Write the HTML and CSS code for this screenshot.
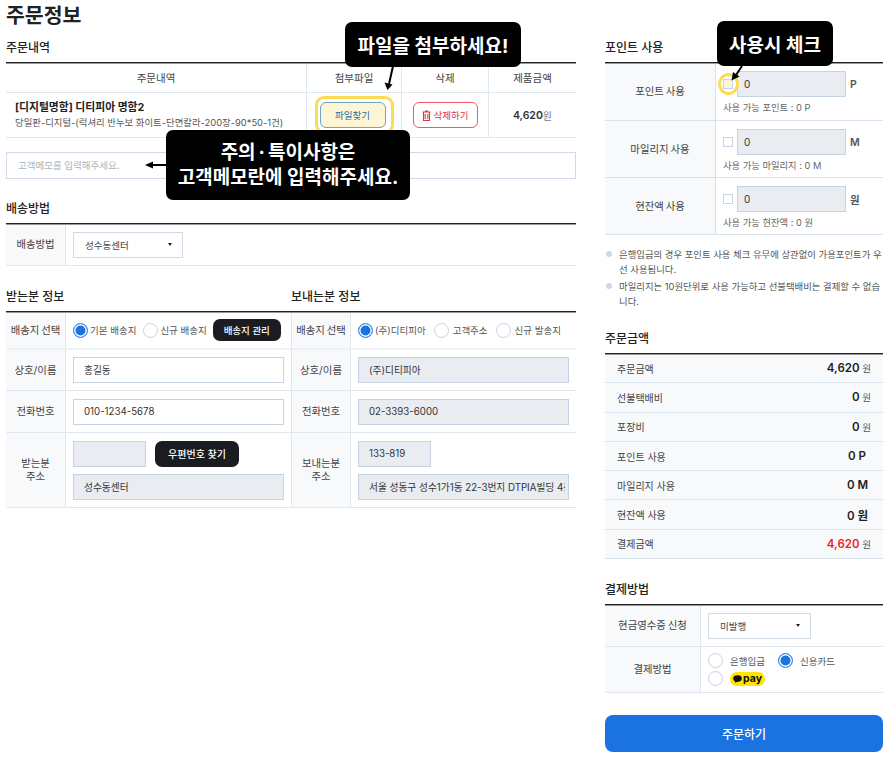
FILE: index.html
```html
<!DOCTYPE html>
<html lang="ko">
<head>
<meta charset="utf-8">
<title>주문정보</title>
<link rel="stylesheet" href="styles.css">
</head>
<body>
<div class="page">
  <main class="left">
    <h1 class="title">주문정보</h1>
    <h2 class="sec first">주문내역</h2>
    <div class="order">
      <div class="order-row head">
        <div class="c">주문내역</div><div class="c bl">첨부파일</div><div class="c bl">삭제</div><div class="c bl">제품금액</div>
      </div>
      <div class="order-row item">
        <div class="c info">
          <strong>[디지털명함] 디티피아 명함2</strong>
          <span>당일판-디지털-(럭셔리 반누보 화이트-단면칼라-200장-90*50-1건)</span>
        </div>
        <div class="c bl"><div class="glow"><button class="file">파일찾기</button></div></div>
        <div class="c bl"><button class="del">
          <svg width="9" height="11" viewBox="0 0 9 11"><path d="M3 1h3M.5 2h8M1.500 2v8.500h6V2M3.200 4v5M5.800 4v5" fill="none" stroke="#e5333b" stroke-width="1.100"/></svg>삭제하기</button></div>
        <div class="c bl price"><b>4,620</b>원</div>
      </div>
    </div>
    <input class="memo" placeholder="고객메모를 입력해주세요.">

    <h2 class="sec ship">배송방법</h2>
    <div class="form ship-form">
      <div class="row r-ship"><div class="th">배송방법</div><div class="td"><div class="select w110"><span>성수동센터</span><i class="caret"></i></div></div></div>
    </div>

    <div class="two">
      <section>
        <h2 class="sec">받는분 정보</h2>
        <div class="form">
          <div class="row r1"><div class="th">배송지 선택</div><div class="td radios">
            <label class="radio on">기본 배송지</label><label class="radio">신규 배송지</label><button class="dark sm">배송지 관리</button>
          </div></div>
          <div class="row r2"><div class="th">상호/이름</div><div class="td"><input class="field" value="홍길동"></div></div>
          <div class="row r2"><div class="th">전화번호</div><div class="td"><input class="field" value="010-1234-5678"></div></div>
          <div class="row r3"><div class="th">받는분<br>주소</div><div class="td stack">
            <div class="zip-line"><input class="field ro zip" readonly><button class="dark zipbtn">우편번호 찾기</button></div>
            <input class="field ro" readonly value="성수동센터">
          </div></div>
        </div>
      </section>
      <section class="sender">
        <h2 class="sec">보내는분 정보</h2>
        <div class="form">
          <div class="row r1"><div class="th">배송지 선택</div><div class="td radios">
            <label class="radio on">(주)디티피아</label><label class="radio">고객주소</label><label class="radio">신규 발송지</label>
          </div></div>
          <div class="row r2"><div class="th">상호/이름</div><div class="td"><input class="field ro" readonly value="(주)디티피아"></div></div>
          <div class="row r2"><div class="th">전화번호</div><div class="td"><input class="field ro" readonly value="02-3393-6000"></div></div>
          <div class="row r3"><div class="th">보내는분<br>주소</div><div class="td stack">
            <div class="zip-line"><input class="field ro zip" readonly value="133-819"></div>
            <input class="field ro clip" readonly value="서울 성동구 성수1가1동 22-3번지 DTPIA빌딩 4층">
          </div></div>
        </div>
      </section>
    </div>
  </main>

  <aside class="right">
    <h2 class="sec r-first">포인트 사용</h2>
    <div class="form wide">
      <div class="row pt"><div class="th">포인트 사용</div><div class="td">
        <div class="pt-line"><span class="check hl"></span><input class="field ro num" readonly value="0"><b>P</b></div>
        <p class="avail">사용 가능 포인트 : 0 P</p></div></div>
      <div class="row pt"><div class="th">마일리지 사용</div><div class="td">
        <div class="pt-line"><span class="check"></span><input class="field ro num" readonly value="0"><b>M</b></div>
        <p class="avail">사용 가능 마일리지 : 0 M</p></div></div>
      <div class="row pt"><div class="th">현잔액 사용</div><div class="td">
        <div class="pt-line"><span class="check"></span><input class="field ro num" readonly value="0"><b>원</b></div>
        <p class="avail">사용 가능 현잔액 : 0 원</p></div></div>
    </div>
    <ul class="notes">
      <li>은행입금의 경우 포인트 사용 체크 유무에 상관없이 가용포인트가 우선 사용됩니다.</li>
      <li>마일리지는 10원단위로 사용 가능하고 선불택배비는 결제할 수 없습니다.</li>
    </ul>

    <h2 class="sec total-h">주문금액</h2>
    <div class="totals">
      <div class="t"><span>주문금액</span><em><b>4,620</b> 원</em></div>
      <div class="t"><span>선불택배비</span><em><b>0</b> 원</em></div>
      <div class="t"><span>포장비</span><em><b>0</b> 원</em></div>
      <div class="t"><span>포인트 사용</span><em class="in p"><b>0 P</b></em></div>
      <div class="t"><span>마일리지 사용</span><em class="in"><b>0 M</b></em></div>
      <div class="t"><span>현잔액 사용</span><em class="in"><b>0 원</b></em></div>
      <div class="t"><span>결제금액</span><em><b class="red">4,620</b> 원</em></div>
    </div>

    <h2 class="sec pay-h">결제방법</h2>
    <div class="form pay">
      <div class="row p1"><div class="th">현금영수증 신청</div><div class="td"><div class="select w103"><span>미발행</span><i class="caret"></i></div></div></div>
      <div class="row p2"><div class="th">결제방법</div><div class="td paygrid">
        <div class="payline"><label class="radio big">은행입금</label><label class="radio big on">신용카드</label></div>
        <div class="payline"><label class="radio big"><span class="kakao"><svg width="9" height="8" viewBox="0 0 9 8"><ellipse cx="4.500" cy="3.600" rx="4.300" ry="3.300" fill="#111"/><path d="M2.500 5.500L2 8l3-2z" fill="#111"/></svg>pay</span></label></div>
      </div></div>
    </div>
    <button class="submit">주문하기</button>
  </aside>

  <div class="tip tip-file">파일을 첨부하세요!</div>
  <div class="tip tip-memo"><span>주의<span class="dot">·</span>특이사항은</span><span>고객메모란에 입력해주세요.</span></div>
  <div class="tip tip-check">사용시 체크</div>
  <span class="ring"></span>
  <svg class="arrows" width="890" height="200" viewBox="0 0 890 200">
    <path d="M393 66L389 84" stroke="#000" stroke-width="2"/><path d="M384.500 82.500L392.500 84.500L387.500 90Z" fill="#000"/>
    <path d="M166 165H152" stroke="#000" stroke-width="2"/><path d="M153 161.500V168.500L145 165Z" fill="#000"/>
    <path d="M742 66L736 75" stroke="#000" stroke-width="2"/><path d="M733 72L739.500 76.500L731.500 80.500Z" fill="#000"/>
  </svg>
</div>
</body>
</html>
```
FILE: styles.css
```css
* { box-sizing: border-box; }
html, body { margin: 0; background: #fff; }
body {
  font-family: Inter, "Noto Sans CJK KR", "Noto Sans", sans-serif;
  color: #333;
  font-size: 10.500px;
}
button, input { font-family: inherit; }
button { cursor: pointer; padding: 0; }
.page {
  position: relative;
  width: 890px;
  height: 767px;
  overflow: hidden;
  padding: 0 7px 0 6px;
  display: grid;
  grid-template-columns: 570px 278px;
  column-gap: 29px;
  align-items: start;
}
.title { margin: 2px 0 0; font-size: 20.500px; line-height: 28px; font-weight: 700; color: #222; }
.sec {
  position: relative;
  z-index: 1;
  margin: 0;
  font-size: 12px;
  line-height: 18px;
  font-weight: 500;
  color: #222;
  padding-bottom: 5px;
  border-bottom: 1px solid #222;
  box-shadow: 0 1px 0 #999;
}
.sec.first { margin-top: 9px; }
.sec.ship { margin-top: 21px; }
.sec.r-first { margin-top: 39px; }
.sec.total-h { margin-top: 21px; }
.sec.pay-h { margin-top: 22px; }

/* order table */
.order-row { display: grid; grid-template-columns: 300px 95px 87px 88px; border-bottom: 1px solid #dfe7f0; }
.order-row.head { height: 30px; }
.order-row.item { height: 45px; }
.c { display: flex; align-items: center; justify-content: center; }
.bl { border-left: 1px solid #dfe7f0; }
.head .c { color: #444; font-size: 10.500px; }
.info { flex-direction: column; align-items: flex-start; padding-left: 9px; }
.info strong { font-size: 10.800px; font-weight: 700; color: #222; line-height: 16px; }
.info span { font-size: 9.400px; color: #555; line-height: 14px; white-space: nowrap; }
.glow { border: 3px solid #fcdc55; border-radius: 9px; padding: 3px 5px 3px 2px; background: #fff; }
.file {
  display: block; width: 66px; height: 26px; border: 1px solid #6ea4c8; border-radius: 6px;
  background: #fdf5d3; color: #1f6fae; font-size: 9.500px;
}
.del {
  display: flex; align-items: center; justify-content: center; gap: 3px;
  width: 65px; height: 26px; border: 1px solid #ef5a5f; border-radius: 6px;
  background: #fff; color: #e5333b; font-size: 9.500px;
}
.price { font-size: 10px; color: #777; }
.price b { color: #333; font-size: 10.500px; font-weight: 600; }
.memo {
  display: block; width: 100%; margin: 14px 0 0; height: 27px; border: 1px solid #cfdbe7; padding: 0 11px;
  font-size: 9.500px; outline: 0;
}
.memo::placeholder { color: #a9b4c0; opacity: 1; }

/* form rows */
.row { display: grid; grid-template-columns: 60px 1fr; border-bottom: 1px solid #dfe7f0; }
.th { display: flex; align-items: center; justify-content: center; text-align: center; background: #f8f9fb; border-right: 1px solid #dfe7f0; color: #444; line-height: 13px; font-size: 10.400px; word-spacing: -1px; }
.td { display: flex; align-items: center; padding: 0 7px; min-width: 0; }
.r-ship { height: 42px; }
.two { display: grid; grid-template-columns: 285px 285px; margin-top: 22px; }
.sender .form { border-left: 1px solid #dfe7f0; }
.sender .row { grid-template-columns: 59px 1fr; }
.r1 { height: 38px; border-bottom: 2px solid #eef2f7; }
.r2 { height: 41px; }
.r2 + .r2 { height: 42px; }
.r3 { height: 75px; }
.stack { flex-direction: column; align-items: stretch; justify-content: center; gap: 7px; }
.field {
  display: block; width: 100%; margin: 0; height: 26px; border: 1px solid #c5d3e3; border-radius: 0; background: #fff; padding: 0 10px;
  font-size: 9.700px; color: #333; outline: 0;
}
.field.ro { background: #e9ecf1; }
.field.clip { padding-right: 3px; }
.zip-line { display: flex; gap: 9px; }
.field.zip { width: 73px; flex: none; }
.dark {
  border: 0; border-radius: 7px; background: #1b1c21; color: #fff; font-weight: 500;
}
.zipbtn { width: 84px; height: 26px; font-size: 10px; }
.sm { width: 68px; height: 22px; font-size: 9.500px; flex: none; margin-left: -1px; }

.radios { padding: 0 4px 0 7px; gap: 7px; white-space: nowrap; }
.radio { display: inline-flex; align-items: center; gap: 2px; font-size: 9.500px; color: #555; }
.radio::before {
  content: ""; width: 13px; height: 13px; flex: none; border-radius: 50%;
  border: 1px solid #c5d3e3; background: #fff;
}
.radio.on::before { border-color: #3f8ae6; background: #1a73e0; box-shadow: inset 0 0 0 1.500px #fff; }
.sender .radios { gap: 8px; }
.sender .radio + .radio { gap: 4px; }

.select {
  display: flex; align-items: center; justify-content: space-between;
  height: 26px; border: 1px solid #cfdbe7; background: #fff; padding: 0 10px 0 11px; font-size: 9.500px; color: #444;
}
.w110 { width: 110px; }
.w103 { width: 103px; }
.caret { width: 0; height: 0; border: 2.500px solid transparent; border-top: 3.500px solid #222; border-bottom: 0; }

/* right */
.wide .row { grid-template-columns: 111px 1fr; }
.pay .row { grid-template-columns: 96px 1fr; }
.pt { height: 57px; border-bottom-color: #d6e2ee; }
.pt:first-child { height: 58px; }
.pt .th { border-right-color: #d6e2ee; }
.pt .td { flex-direction: column; align-items: flex-start; justify-content: flex-start; padding: 8px 0 0 7px; }
.pt-line { display: flex; align-items: center; color: #444; }
.pt-line b { margin-left: 4px; font-size: 10.500px; font-weight: 600; color: #555; }
.check { width: 10px; height: 10px; border: 1px solid #c5d3e3; background: #fff; margin-right: 4px; flex: none; }
.check.hl { background: #fdf6d8; position: relative; z-index: 2; }
.field.num { width: 109px; padding-left: 6px; font-size: 10px; }
.avail { margin: 4px 0 0; font-size: 9.300px; color: #666; line-height: 13px; }
.notes { list-style: none; margin: 12px 0 0; padding: 0; font-size: 9.400px; line-height: 15px; color: #555; }
.notes li { position: relative; padding-left: 14px; margin-bottom: 2px; }
.notes li::before { content: ""; position: absolute; left: 1px; top: 4px; width: 6px; height: 6px; border-radius: 50%; background: #cdd8e8; }
.t {
  display: flex; justify-content: space-between; align-items: center; height: 29.300px;
  background: #f8f9fb; border-bottom: 1px solid #dae4ef; padding: 0 12px;
  font-size: 10px; color: #444;
}
.t em { font-style: normal; font-size: 9.500px; color: #555; }
.t em.in { padding-right: 3px; }
.t em.p { padding-right: 5px; }
.t b { font-weight: 600; font-size: 11.500px; color: #222; }
.t b.red { color: #f01f26; }
.p1 { height: 42px; }
.p2 { height: 46px; }
.paygrid { flex-direction: column; align-items: flex-start; justify-content: center; gap: 3px; }
.payline { display: flex; gap: 13px; }
.radio.big { gap: 7px; font-size: 9.500px; }
.kakao {
  display: inline-flex; align-items: center; gap: 1px; height: 14px; width: 35px; padding: 0 3px;
  border-radius: 7px; background: #ffe500; color: #111; font-weight: 700; font-size: 10.500px;
}
.submit {
  display: block; width: 278px; height: 37px; margin-top: 22px; border: 0; border-radius: 8px;
  background: #1a73e0; color: #fff; font-size: 12px; font-weight: 500;
}

/* callouts */
.tip {
  position: absolute; z-index: 5; background: #000; color: #fff; border-radius: 7px; font-weight: 700;
  text-align: center; display: flex; align-items: center; justify-content: center; font-size: 19px;
}
.tip-file { left: 345px; top: 22px; width: 176px; height: 45px; }
.tip-memo { left: 166px; top: 130px; width: 244px; height: 70px; line-height: 25px; flex-direction: column; }
.dot { margin: 0 3px; }
.tip-check { left: 717px; top: 21px; width: 116px; height: 45px; }
.ring { position: absolute; z-index: 1; left: 718px; top: 73px; width: 21px; height: 22px; border-radius: 50%; border: 3px solid #fcdc55; }
.arrows { position: absolute; left: 0; top: 0; z-index: 6; pointer-events: none; }
```
